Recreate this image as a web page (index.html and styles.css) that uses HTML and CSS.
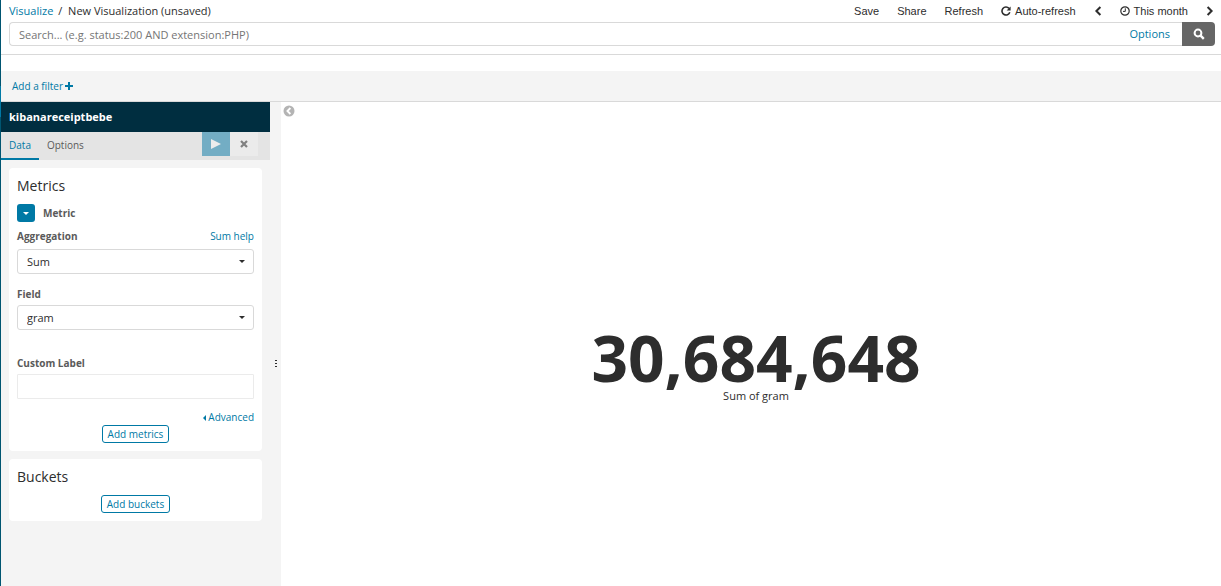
FILE: index.html
```html
<!DOCTYPE html>
<html lang="en">
<head>
  <meta charset="UTF-8" />
  <meta name="viewport" content="width=device-width, initial-scale=1.0"/>
  <title>New Visualization (unsaved) - Kibana</title>
  <link rel="stylesheet" href="styles.css">
</head>
<body>
  <!-- Edge of the global navigation -->
  <div class="global-nav"><span class="global-nav-active"></span></div>

  <div class="app">
    <header class="top-nav">
      <div class="nav-row">
        <div class="breadcrumbs">
          <a href="#">Visualize</a>
          <span class="slash">/</span>
          <span>New Visualization (unsaved)</span>
        </div>
        <div class="menu">
          <button type="button">Save</button>
          <button type="button">Share</button>
          <button type="button">Refresh</button>
          <button type="button">
            <svg width="10" height="10" viewBox="0 0 10 10"><path d="M8 2.4A4 4 0 1 0 8.8 6.3" fill="none" stroke="currentColor" stroke-width="1.6"/><path d="M9.6 0.4V4.4H5.6Z" fill="currentColor"/></svg>
            Auto-refresh
          </button>
          <button type="button" aria-label="Previous period">
            <svg width="8" height="10" viewBox="0 0 8 10"><path d="M6.4 1L2.4 5L6.4 9" fill="none" stroke="currentColor" stroke-width="2"/></svg>
          </button>
          <button type="button">
            <svg width="10" height="10" viewBox="0 0 10 10"><circle cx="5" cy="5" r="4.2" fill="none" stroke="currentColor" stroke-width="1.2"/><path d="M5.3 2.3V5.4H3" fill="none" stroke="currentColor"/></svg>
            This month
          </button>
          <button type="button" aria-label="Next period">
            <svg width="8" height="10" viewBox="0 0 8 10"><path d="M1.6 1L5.6 5L1.6 9" fill="none" stroke="currentColor" stroke-width="2"/></svg>
          </button>
        </div>
      </div>

      <form class="query-bar">
        <div class="query-field">
          <input type="text" id="queryInput" aria-label="Search" placeholder="Search... (e.g. status:200 AND extension:PHP)">
          <a href="#">Options</a>
        </div>
        <button type="submit" class="search-btn" aria-label="Submit search">
          <svg width="12" height="12" viewBox="0 0 12 12"><circle cx="5" cy="5" r="3.4" fill="none" stroke="currentColor" stroke-width="2"/><path d="M7.4 7.4L10.8 10.8" stroke="currentColor" stroke-width="2.4"/></svg>
        </button>
      </form>
    </header>

    <div class="filter-bar">
      <a href="#">Add a filter
        <svg width="8" height="8" viewBox="0 0 8 8"><path d="M4 0V8M0 4H8" stroke="currentColor" stroke-width="2"/></svg>
      </a>
    </div>

    <div class="editor">
      <aside class="sidebar">
        <h2 class="index-title">kibanareceiptbebe</h2>
        <div class="tabs">
          <a href="#" class="tab active">Data</a>
          <a href="#" class="tab">Options</a>
          <div class="tab-actions">
            <button type="button" class="apply-btn" aria-label="Apply changes">
              <svg width="10" height="10" viewBox="0 0 10 10"><path d="M0 0L10 5L0 10Z" fill="currentColor"/></svg>
            </button>
            <button type="button" class="discard-btn" aria-label="Discard changes">
              <svg width="8" height="8" viewBox="0 0 8 8"><path d="M1 1L7 7M7 1L1 7" stroke="currentColor" stroke-width="2.2"/></svg>
            </button>
          </div>
        </div>

        <div class="panels">
          <section class="panel">
            <h3>Metrics</h3>
            <div class="agg-header">
              <button type="button" class="toggle-btn" aria-label="Toggle metric editor"><span class="caret"></span></button>
              <span class="agg-name">Metric</span>
            </div>

            <div class="field">
              <div class="label-row">
                <label for="aggregation">Aggregation</label>
                <a href="#">Sum help</a>
              </div>
              <div class="select-wrap">
                <select id="aggregation">
                  <option>Sum</option>
                </select>
              </div>
            </div>

            <div class="field">
              <label for="field">Field</label>
              <div class="select-wrap">
                <select id="field">
                  <option>gram</option>
                </select>
              </div>
            </div>

            <div class="field custom">
              <label for="customLabel">Custom Label</label>
              <input type="text" id="customLabel">
            </div>

            <a href="#" class="advanced"><span class="caret-left"></span>Advanced</a>
            <button type="button" class="add-btn">Add metrics</button>
          </section>

          <section class="panel">
            <h3>Buckets</h3>
            <button type="button" class="add-btn">Add buckets</button>
          </section>
        </div>
      </aside>

      <div class="resizer">
        <svg width="2" height="8" viewBox="0 0 2 8"><path d="M0 0H2V1H0ZM0 3H2V4H0ZM0 6H2V7H0Z" fill="#2d2d2d"/></svg>
      </div>

      <main class="canvas">
        <button type="button" class="collapse-btn" aria-label="Collapse sidebar">
          <svg width="12" height="12" viewBox="0 0 12 12"><circle cx="6" cy="6" r="5.5" fill="#b4b4b4"/><path d="M7.4 3L4.4 6L7.4 9" fill="none" stroke="#fff" stroke-width="1.8"/></svg>
        </button>
        <div class="metric">
          <div class="metric-value">30,684,648</div>
          <div class="metric-label">Sum of gram</div>
        </div>
      </main>
    </div>
  </div>
</body>
</html>
```
FILE: styles.css
```css
* {
  box-sizing: border-box;
  margin: 0;
  padding: 0;
}

body {
  display: flex;
  min-height: 100vh;
  font-family: "Open Sans", sans-serif;
  font-size: 11px;
  line-height: 16px;
  color: #2d2d2d;
  background: #fff;
}

a {
  color: #0079a5;
  text-decoration: none;
}

button,
input,
select {
  font-family: inherit;
  font-size: inherit;
  color: inherit;
}

button {
  border: none;
  background: none;
  cursor: pointer;
}

svg {
  display: block;
}

.global-nav {
  width: 1px;
  padding-top: 86px;
  background: #005571;
}

.global-nav-active {
  display: block;
  height: 31px;
  background: #0079a5;
}

.app {
  flex: 1;
  min-width: 0;
  display: flex;
  flex-direction: column;
}

/* Top navigation */
.top-nav {
  padding-bottom: 8px;
  margin-bottom: 16px;
  border-bottom: 1px solid #d9d9d9;
}

.nav-row {
  display: flex;
  justify-content: space-between;
  align-items: center;
  height: 22px;
  padding: 0 8px;
}

.slash {
  margin: 0 3px 0 2px;
}

.menu {
  display: flex;
  align-items: center;
  gap: 18px;
  margin-right: -1px;
  font-family: "Liberation Sans", Arial, sans-serif;
}

.menu button {
  display: flex;
  align-items: center;
  gap: 4px;
}

.query-bar {
  display: flex;
  height: 24px;
  padding: 0 6px 0 8px;
}

.query-field {
  flex: 1;
  display: flex;
  align-items: center;
  padding-right: 12px;
  border: 1px solid #d9d9d9;
  border-right: none;
  border-radius: 4px 0 0 4px;
}

.query-field input {
  flex: 1;
  height: 20px;
  padding-left: 9px;
  border: none;
  outline: none;
  background: none;
}

.query-field input::placeholder {
  color: #757575;
}

.search-btn {
  display: flex;
  align-items: center;
  justify-content: center;
  width: 33px;
  background: #666;
  color: #fff;
  border-radius: 0 4px 4px 0;
}

/* Filters */
.filter-bar {
  display: flex;
  align-items: center;
  height: 31px;
  padding-left: 11px;
  font-size: 10px;
  background: #f4f4f4;
  border-bottom: 1px solid #d9d9d9;
}

.filter-bar a {
  display: flex;
  align-items: center;
  gap: 2px;
}

/* Editor */
.editor {
  flex: 1;
  display: flex;
}

.sidebar {
  width: 269px;
  background: #f4f4f4;
}

.index-title {
  padding: 0 8px;
  font-size: 11px;
  line-height: 30px;
  color: #fff;
  background: #002e40;
}

.tabs {
  display: flex;
  height: 28px;
  font-size: 10px;
  line-height: 26px;
  background: #e4e4e4;
}

.tab {
  padding: 0 8px;
  color: #5a5a5a;
}

.tab.active {
  color: #0079a5;
  border-bottom: 2px solid #0079a5;
}

.tab-actions {
  display: flex;
  height: 24px;
  margin-left: auto;
  margin-right: 12px;
}

.tab-actions button {
  display: flex;
  align-items: center;
  justify-content: center;
  width: 28px;
}

.apply-btn {
  color: #ececec;
  background: #73adc4;
}

.discard-btn {
  color: #808080;
  background: #ebebeb;
}

.panels {
  display: flex;
  flex-direction: column;
  gap: 8px;
  padding: 8px;
}

.panel {
  display: flex;
  flex-direction: column;
  padding: 8px;
  font-size: 10px;
  background: #fff;
  border-radius: 4px;
}

.panel h3 {
  margin-bottom: 8px;
  font-size: 14px;
  font-weight: 400;
  line-height: 20px;
}

.agg-header {
  display: flex;
  align-items: center;
  gap: 8px;
  margin-bottom: 6px;
}

.toggle-btn {
  display: flex;
  align-items: center;
  justify-content: center;
  width: 18px;
  height: 18px;
  background: #0079a5;
  border-radius: 3px;
}

.caret {
  border: 3px solid transparent;
  border-top-color: #fff;
  border-bottom: none;
}

.agg-name,
.field label {
  font-weight: 700;
  color: #5a5a5a;
}

.field {
  margin-bottom: 12px;
}

.field.custom {
  margin-top: 13px;
  margin-bottom: 11px;
}

.field label {
  display: block;
  margin-bottom: 3px;
}

.label-row {
  display: flex;
  justify-content: space-between;
  margin-bottom: 2px;
}

.select-wrap {
  display: grid;
  align-items: center;
}

.select-wrap select,
.select-wrap::after {
  grid-area: 1 / 1;
}

.select-wrap::after {
  content: "";
  justify-self: end;
  margin-right: 9px;
  border: 3px solid transparent;
  border-top-color: #2d2d2d;
  border-bottom: none;
  pointer-events: none;
}

.field select,
.field input {
  display: block;
  width: 100%;
  height: 25px;
  padding: 0 9px;
  font-size: 11px;
  background: #fff;
  border: 1px solid #d9d9d9;
  border-radius: 3px;
  appearance: none;
}

.field input {
  border-color: #ebebeb;
  border-radius: 1px;
}

.advanced {
  display: flex;
  align-items: center;
  align-self: flex-end;
  gap: 2px;
  line-height: 15px;
}

.caret-left {
  border: 3px solid transparent;
  border-right-color: #0079a5;
  border-left: none;
}

.add-btn {
  align-self: center;
  height: 18px;
  padding: 0 5px;
  line-height: 16px;
  color: #0079a5;
  border: 1px solid #0079a5;
  border-radius: 3px;
}

.resizer {
  display: flex;
  align-items: center;
  justify-content: center;
  width: 11px;
  background: #f4f4f4;
}

.resizer svg {
  margin-top: 40px;
}

.canvas {
  flex: 1;
  display: grid;
  min-width: 0;
}

.collapse-btn {
  grid-area: 1 / 1;
  place-self: start;
  padding: 3px 2px;
}

.metric {
  grid-area: 1 / 1;
  place-self: center;
  padding: 44px 0 0 10px;
  text-align: center;
}

.metric-value {
  font-size: 64px;
  font-weight: 700;
  line-height: 60px;
}
```
